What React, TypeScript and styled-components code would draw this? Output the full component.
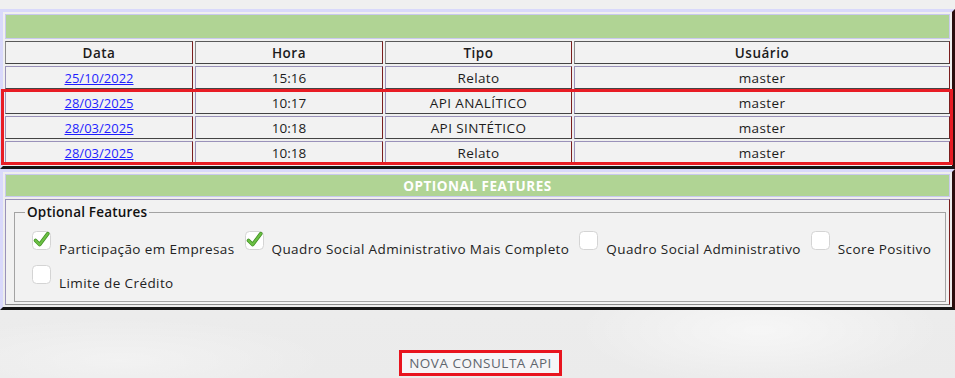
import React from "react";
import styled, { createGlobalStyle } from "styled-components";

const GlobalStyle = createGlobalStyle`
  html, body { margin: 0; padding: 0; }
  body {
    width: 955px;
    height: 378px;
    overflow: hidden;
    background: #ededed;
    font-family: "Open Sans", "DejaVu Sans", sans-serif;
    color: #1c1c1c;
  }
  * { box-sizing: border-box; }
`;

const Page = styled.main`
  display: flex;
  flex-direction: column;
  padding-top: 9px;
  height: 378px;
  background:
    radial-gradient(ellipse 260px 80px at 760px 330px, rgba(255,255,255,0.55), rgba(255,255,255,0) 70%),
    radial-gradient(ellipse 300px 60px at 120px 360px, rgba(255,255,255,0.35), rgba(255,255,255,0) 70%),
    linear-gradient(#f0f0f0 0, #f0f0f0 60px, #ebebeb 100%);
`;

const Panel = styled.section`
  position: relative;
  display: flex;
  flex-direction: column;
  gap: 2px;
  padding: 2px;
  border: 3px solid;
  border-color: #d9d9fb #2b0e0e #141414 #d9d9fb;
`;

const GreenBar = styled.div<{ $h: number }>`
  height: ${(p) => p.$h}px;
  border: 1px solid #c9c9ee;
  background: #b0d494;
  color: #ffffff;
  font-weight: 700;
  font-size: 13.5px;
  letter-spacing: 0.5px;
  display: flex;
  align-items: center;
  justify-content: center;
`;

const Row = styled.div`
  display: grid;
  grid-template-columns: 188px 188px 187px 1fr;
  column-gap: 2px;
`;

const Cell = styled.div<{ $head?: boolean; $num?: boolean }>`
  height: 23px;
  border: 1px solid;
  border-color: ${(p) =>
    p.$head ? "#5a5a5a #7a1e1e #444444 #8a8a8a" : "#9a92ba #7a1e1e #444444 #9a92ba"};
  background: #f2f2f2;
  display: flex;
  align-items: center;
  justify-content: center;
  font-size: 13.5px;
  letter-spacing: ${(p) => (p.$num ? "0" : p.$head ? "0.5px" : "0.4px")};
  font-weight: ${(p) => (p.$head ? 600 : 400)};
  color: #1c1c1c;
`;

const DateLink = styled.a`
  color: #1f1fff;
  text-decoration: underline;
  cursor: pointer;
  font-size: 13px;
`;

const Highlight = styled.div`
  position: absolute;
  left: -2px;
  top: 77px;
  width: 952px;
  height: 76px;
  border: 3px solid #e81c24;
  pointer-events: none;
`;

const FeatureCell = styled.div`
  height: 106px;
  border: 1px solid;
  border-color: #9a92ba #7a1e1e #8a8a8a #9a92ba;
  background: #f2f2f2;
  padding: 3px 3px 0 8px;
`;

const FieldSet = styled.fieldset`
  margin: 0;
  padding: 0 2px 0 10px;
  border: 1px solid #a3a3a3;
  height: 99px;
`;

const Legend = styled.legend`
  padding: 0 2px;
  font-size: 13.5px;
  font-weight: 600;
  letter-spacing: 0.2px;
  line-height: 18px;
  color: #111;
`;

const Options = styled.div`
  display: flex;
  flex-wrap: wrap;
  column-gap: 10px;
  margin-top: 10px;
  padding-left: 7px;
`;

const Option = styled.label`
  display: flex;
  align-items: flex-start;
  height: 34px;
  gap: 8px;
  cursor: pointer;
`;

const OptionText = styled.span`
  margin-top: 9px;
  font-size: 13.5px;
  letter-spacing: 0.4px;
  line-height: 18px;
  color: #222;
  white-space: nowrap;
`;

const Box = styled.span`
  display: block;
  width: 19px;
  height: 19px;
  flex: none;
`;

const Check = ({ checked }: { checked: boolean }) => (
  <Box>
    <svg width="19" height="19" viewBox="0 0 19 19" style={{ overflow: "visible" }}>
      <rect x="0.5" y="0.5" width="18" height="18" rx="4" fill="#ffffff" stroke="#d4d4d4" />
      {checked && (
        <>
          <path d="M3.5 9.5 L7.6 13.6 L15.8 2.6" fill="none" stroke="#3f8f22" strokeWidth="3.6" strokeLinecap="round" strokeLinejoin="round" />
          <path d="M3.5 9.5 L7.6 13.6 L15.8 2.6" fill="none" stroke="#6cc045" strokeWidth="2.2" strokeLinecap="round" strokeLinejoin="round" />
        </>
      )}
    </svg>
  </Box>
);

const ButtonRow = styled.div`
  display: flex;
  justify-content: center;
  margin-top: 40px;
  padding-left: 6px;
`;

const NewButton = styled.button`
  width: 163px;
  height: 26px;
  border: 3px solid #e8141e;
  background: #f5f5f7;
  color: #60666e;
  font-family: "Open Sans", "DejaVu Sans", sans-serif;
  font-size: 13.5px;
  letter-spacing: 0.5px;
  font-weight: 500;
  text-transform: uppercase;
  padding: 0;
  cursor: pointer;
`;

type Entry = { data: string; hora: string; tipo: string; usuario: string };

const entries: Entry[] = [
  { data: "25/10/2022", hora: "15:16", tipo: "Relato", usuario: "master" },
  { data: "28/03/2025", hora: "10:17", tipo: "API ANALÍTICO", usuario: "master" },
  { data: "28/03/2025", hora: "10:18", tipo: "API SINTÉTICO", usuario: "master" },
  { data: "28/03/2025", hora: "10:18", tipo: "Relato", usuario: "master" },
];

const features = [
  { label: "Participação em Empresas", checked: true },
  { label: "Quadro Social Administrativo Mais Completo", checked: true },
  { label: "Quadro Social Administrativo", checked: false },
  { label: "Score Positivo", checked: false },
  { label: "Limite de Crédito", checked: false },
];

export default function App() {
  return (
    <>
      <GlobalStyle />
      <Page>
        <Panel>
          <GreenBar $h={25} />
          <Row>
            <Cell $head>Data</Cell>
            <Cell $head>Hora</Cell>
            <Cell $head>Tipo</Cell>
            <Cell $head>Usuário</Cell>
          </Row>
          {entries.map((e, i) => (
            <Row key={i}>
              <Cell $num>
                <DateLink>{e.data}</DateLink>
              </Cell>
              <Cell $num>{e.hora}</Cell>
              <Cell>{e.tipo}</Cell>
              <Cell>{e.usuario}</Cell>
            </Row>
          ))}
          <Highlight />
        </Panel>
        <Panel>
          <GreenBar $h={23}>OPTIONAL FEATURES</GreenBar>
          <FeatureCell>
            <FieldSet>
              <Legend>Optional Features</Legend>
              <Options>
                {features.map((f) => (
                  <Option key={f.label}>
                    <Check checked={f.checked} />
                    <OptionText>{f.label}</OptionText>
                  </Option>
                ))}
              </Options>
            </FieldSet>
          </FeatureCell>
        </Panel>
        <ButtonRow>
          <NewButton>Nova Consulta API</NewButton>
        </ButtonRow>
      </Page>
    </>
  );
}
